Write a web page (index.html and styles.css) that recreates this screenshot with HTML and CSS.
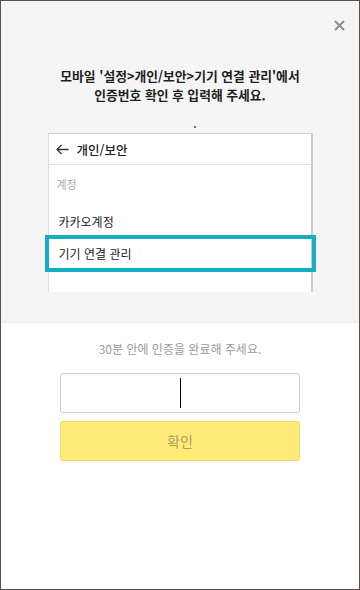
FILE: index.html
```html
<!DOCTYPE html>
<html lang="ko">
<head>
    <meta charset="UTF-8">
    <meta name="viewport" content="width=device-width, initial-scale=1.0">
    <title>기기 연결 인증</title>
    <link rel="stylesheet" href="styles.css">
</head>
<body>
    <div class="window">
        <div class="guide-section">
            <button class="close-btn" aria-label="닫기">
                <svg width="11" height="11" viewBox="0 0 11 11">
                    <path d="M1 1 L10 10 M10 1 L1 10" stroke="#8c8c8c" stroke-width="2" fill="none"/>
                </svg>
            </button>

            <p class="guide-text">모바일 '설정&gt;개인/보안&gt;기기 연결 관리'에서<br>인증번호 확인 후 입력해 주세요.</p>

            <div class="dot-row"><span class="dot"></span></div>

            <!-- Phone screen capture -->
            <div class="phone">
                <div class="phone-header">
                    <svg class="back-arrow" width="13" height="11" viewBox="0 0 13 11">
                        <path d="M12.5 5.5 H1 M5.5 1 L1 5.5 L5.5 10" stroke="#333" stroke-width="1.3" fill="none"/>
                    </svg>
                    <span>개인/보안</span>
                </div>
                <div class="phone-sub">계정</div>
                <div class="phone-item">카카오계정</div>
                <div class="phone-item highlight">기기 연결 관리</div>
                <div class="phone-rest"></div>
            </div>
        </div>

        <div class="form-section">
            <p class="time-text">30분 안에 인증을 완료해 주세요.</p>
            <div class="code-input"><span class="caret"></span></div>
            <button class="confirm-btn" disabled>확인</button>
        </div>
    </div>
</body>
</html>
```

FILE: styles.css
```css
body {
    margin: 0;
    font-family: "Noto Sans CJK KR", "Noto Sans", sans-serif;
    color: #222;
}

.window {
    width: 360px;
    height: 590px;
    box-sizing: border-box;
    border: 1px solid #614c4c;
    background-color: #ffffff;
    display: flex;
    flex-direction: column;
}

/* Upper grey area with instructions */
.guide-section {
    position: relative;
    background-color: #f5f5f5;
    border-bottom: 1px solid #ebebeb;
    height: 322px;
    box-sizing: border-box;
    padding-top: 65px;
    display: flex;
    flex-direction: column;
    align-items: center;
}

.close-btn {
    position: absolute;
    top: 17px;
    right: 12px;
    width: 15px;
    height: 15px;
    padding: 0;
    border: none;
    background: none;
    display: flex;
    align-items: center;
    justify-content: center;
    cursor: pointer;
}

.guide-text {
    margin: 0;
    font-size: 12.8px;
    font-weight: 700;
    line-height: 19px;
    text-align: center;
    color: #1e1e1e;
}

.dot-row {
    width: 100%;
    height: 29px;
    display: flex;
    align-items: flex-end;
    justify-content: center;
}

.dot {
    width: 2px;
    height: 2px;
    margin: 0 0 5px 30px;
    background-color: #2a2aff;
    border-radius: 50%;
}

/* Phone screenshot */
.phone {
    width: 265px;
    box-sizing: border-box;
    background-color: #fff;
    border-top: 1px solid #cfcfcf;
    border-left: 1px solid #dcdcdc;
    border-right: 2px solid #cdcdcd;
}

.phone-header {
    height: 30px;
    border-bottom: 1px solid #e0e0e0;
    display: flex;
    align-items: center;
    gap: 8px;
    padding-left: 7px;
    font-size: 12.5px;
    font-weight: 500;
    color: #222;
}

.phone-sub {
    height: 38px;
    display: flex;
    align-items: center;
    padding-left: 8px;
    font-size: 11px;
    color: #aaa;
}

.phone-item {
    height: 36px;
    display: flex;
    align-items: center;
    padding-left: 10px;
    font-size: 12px;
    color: #222;
}

.phone-item.highlight {
    height: 29px;
    outline: 4px solid #15aec2;
    position: relative;
    margin-right: -1px;
}

.phone-rest {
    height: 24px;
}

/* Lower form area */
.form-section {
    padding-top: 17px;
    display: flex;
    flex-direction: column;
    align-items: center;
}

.time-text {
    margin: 0 0 15px;
    font-size: 12px;
    line-height: 18px;
    color: #9a9a9a;
}

.code-input {
    width: 240px;
    height: 40px;
    box-sizing: border-box;
    border: 1px solid #cfcfcf;
    border-radius: 3px;
    background-color: #fff;
    display: flex;
    align-items: center;
    justify-content: center;
}

.caret {
    width: 1px;
    height: 30px;
    background-color: #000;
}

.confirm-btn {
    margin-top: 8px;
    width: 240px;
    height: 40px;
    border: 1px solid #f1dc6c;
    border-radius: 3px;
    background-color: #feeb77;
    color: #ac9f62;
    font-family: inherit;
    font-size: 14px;
    cursor: default;
}
```
